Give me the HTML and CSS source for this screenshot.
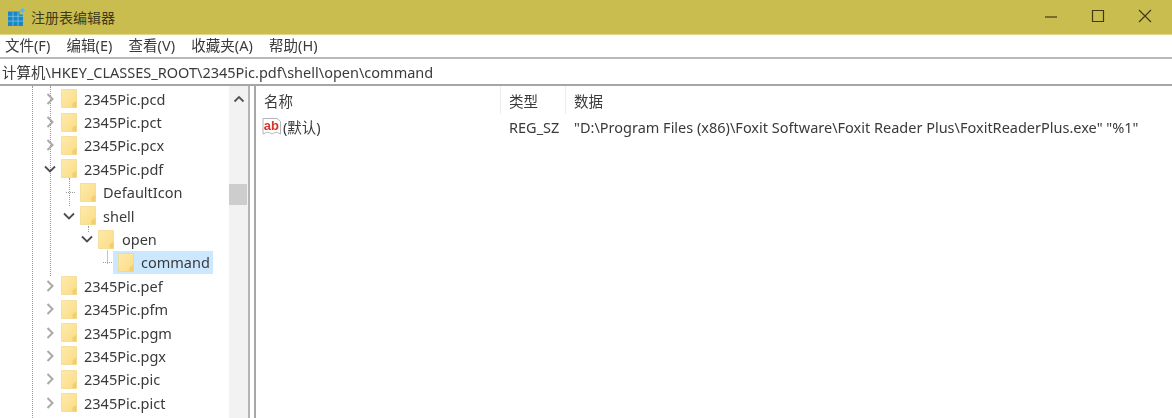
FILE: index.html
```html
<!DOCTYPE html>
<html lang="zh-CN">
<head>
<meta charset="utf-8">
<title>注册表编辑器</title>
<link rel="stylesheet" href="styles.css">
</head>
<body>
<svg class="defs" width="0" height="0" aria-hidden="true">
  <defs>
    <linearGradient id="fg" x1="0" y1="0" x2="1" y2="1">
      <stop offset="0" stop-color="#fdeaac"/>
      <stop offset="1" stop-color="#fbdc84"/>
    </linearGradient>
    <symbol id="folder" viewBox="0 0 16 19">
      <path d="M.5.500h15v18H.5z" fill="url(#fg)" stroke="#efd27e" stroke-width=".6"/>
      <path d="M11.500 18.600v-4l4-3v7z" fill="#f3cf6c"/>
    </symbol>
    <symbol id="chev-r" viewBox="0 0 12 14">
      <path d="M3.500 2l5 5-5 5" fill="none" stroke="#a9a9a9" stroke-width="2"/>
    </symbol>
    <symbol id="chev-d" viewBox="0 0 12 14">
      <path d="M1 4.500l5 5 5-5" fill="none" stroke="#4d4d4d" stroke-width="1.800"/>
    </symbol>
  </defs>
</svg>
<div class="window">
  <header class="titlebar">
    <svg class="app-icon" viewBox="0 0 18 18" width="18" height="18" aria-hidden="true">
      <path d="M1 3.500h15v14.500H1z" fill="#1a86c4"/>
      <path d="M6 3.500V18M11 3.500V18M1 8.300h15M1 13.100h15" stroke="#7cc4e6" stroke-width=".8"/>
      <path d="M12.500 3.500h4v3h-4z" fill="#c9bd50"/>
      <path d="M15.500 0l2.500 2.500-2.500 2.500-2.500-2.500z" fill="#5cb8e0"/>
    </svg>
    <span class="title">注册表编辑器</span>
    <div class="controls">
      <svg width="14" height="14" viewBox="0 0 14 14" aria-hidden="true"><path d="M1 8h12" stroke="#3e3a14" stroke-width="1.200"/></svg>
      <svg width="14" height="14" viewBox="0 0 14 14" aria-hidden="true"><path d="M1.500 1.500h11v11h-11z" fill="none" stroke="#3e3a14" stroke-width="1.200"/></svg>
      <svg width="14" height="14" viewBox="0 0 14 14" aria-hidden="true"><path d="M1 1l12 12M13 1L1 13" stroke="#3e3a14" stroke-width="1.200"/></svg>
    </div>
  </header>
  <nav class="menubar">
    <span>文件(F)</span><span>编辑(E)</span><span>查看(V)</span><span>收藏夹(A)</span><span>帮助(H)</span>
  </nav>
  <div class="address">计算机\HKEY_CLASSES_ROOT\2345Pic.pdf\shell\open\command</div>
  <main class="panes">
    <aside class="tree-pane">
      <div class="tree">
        <span class="guide guide-root"></span>
        <span class="guide guide-pdf"></span>
        <span class="guide guide-shell"></span>
        <span class="guide guide-open"></span>
        <span class="guide guide-cmd"></span>
        <div class="row l0"><svg class="tw"><use href="#chev-r"/></svg><svg class="fd"><use href="#folder"/></svg><span>2345Pic.pcd</span></div>
        <div class="row l0"><svg class="tw"><use href="#chev-r"/></svg><svg class="fd"><use href="#folder"/></svg><span>2345Pic.pct</span></div>
        <div class="row l0"><svg class="tw"><use href="#chev-r"/></svg><svg class="fd"><use href="#folder"/></svg><span>2345Pic.pcx</span></div>
        <div class="row l0"><svg class="tw"><use href="#chev-d"/></svg><svg class="fd"><use href="#folder"/></svg><span>2345Pic.pdf</span></div>
        <div class="row l1"><span class="tw conn"></span><svg class="fd"><use href="#folder"/></svg><span>DefaultIcon</span></div>
        <div class="row l1"><svg class="tw"><use href="#chev-d"/></svg><svg class="fd"><use href="#folder"/></svg><span>shell</span></div>
        <div class="row l2"><svg class="tw"><use href="#chev-d"/></svg><svg class="fd"><use href="#folder"/></svg><span>open</span></div>
        <div class="row l3"><span class="tw conn"></span><span class="sel"><svg class="fd"><use href="#folder"/></svg><span>command</span></span></div>
        <div class="row l0"><svg class="tw"><use href="#chev-r"/></svg><svg class="fd"><use href="#folder"/></svg><span>2345Pic.pef</span></div>
        <div class="row l0"><svg class="tw"><use href="#chev-r"/></svg><svg class="fd"><use href="#folder"/></svg><span>2345Pic.pfm</span></div>
        <div class="row l0"><svg class="tw"><use href="#chev-r"/></svg><svg class="fd"><use href="#folder"/></svg><span>2345Pic.pgm</span></div>
        <div class="row l0"><svg class="tw"><use href="#chev-r"/></svg><svg class="fd"><use href="#folder"/></svg><span>2345Pic.pgx</span></div>
        <div class="row l0"><svg class="tw"><use href="#chev-r"/></svg><svg class="fd"><use href="#folder"/></svg><span>2345Pic.pic</span></div>
        <div class="row l0"><svg class="tw"><use href="#chev-r"/></svg><svg class="fd"><use href="#folder"/></svg><span>2345Pic.pict</span></div>
      </div>
      <div class="scrollbar">
        <svg class="sb-up" width="12" height="8" viewBox="0 0 12 8" aria-hidden="true"><path d="M1.500 6.500l4.500-4.500 4.500 4.500" fill="none" stroke="#555" stroke-width="1.800"/></svg>
        <div class="thumb"></div>
      </div>
    </aside>
    <section class="list-pane">
      <div class="list-head">
        <span class="col col-name">名称</span>
        <span class="col col-type">类型</span>
        <span class="col col-data">数据</span>
      </div>
      <div class="list-row">
        <span class="col col-name">
          <svg class="ab" width="20" height="20" viewBox="0 0 20 20" aria-hidden="true">
            <path d="M1 1.500h14l3.500 3v12.500l-3-1.500c-2-.6-3.500.3-5.500 1.500-2-1.200-3.500-2-5.500-1.500L1 17z" fill="#fff" stroke="#b5b5b5"/>
            <text x="1.800" y="13" class="ab-text">ab</text>
          </svg>
          <span>(默认)</span>
        </span>
        <span class="col col-type">REG_SZ</span>
        <span class="col col-data">"D:\Program Files (x86)\Foxit Software\Foxit Reader Plus\FoxitReaderPlus.exe" "%1"</span>
      </div>
    </section>
  </main>
</div>
</body>
</html>
```
FILE: styles.css
```css
* { box-sizing: border-box; }
html, body { margin: 0; padding: 0; background: #fff; overflow: hidden; }
body { font-family: "Noto Sans", "Noto Sans CJK SC", sans-serif; font-size: 14.500px; color: #3a3a3a; }
.defs { position: absolute; }
.window { width: 1172px; height: 418px; display: flex; flex-direction: column; overflow: hidden; filter: blur(0.3px); }

.titlebar { height: 35px; flex: none; background: #c9bd50; display: flex; align-items: center; padding-left: 7px; border-bottom: 1px solid #e2d78e; }
.app-icon { flex: none; margin-right: 6px; }
.title { font-size: 14px; color: #3f3b1c; }
.controls { margin-left: auto; display: flex; width: 164px; justify-content: space-between; padding: 0 20px 2px 36px; align-items: center; }

.menubar { height: 24px; flex: none; display: flex; align-items: center; gap: 16.300px; padding: 0 0 3px 5px; border-bottom: 2px solid #b9b9b9; }

.address { height: 27px; flex: none; display: flex; align-items: center; padding-left: 2px; border-bottom: 2px solid #a6a6a6; white-space: nowrap; }

.panes { flex: 1; display: flex; min-height: 0; }

.tree-pane { width: 256px; flex: none; display: flex; border-right: 2px solid #a8a8a8; position: relative; }
.tree { flex: 1; position: relative; padding-top: 1px; min-width: 0; }
.scrollbar { width: 21px; flex: none; position: relative; background: #f2f2f2; margin-right: 4px; border-right: 2px solid #b4b4b4; }
.sb-up { position: absolute; left: 4px; top: 9px; }
.thumb { position: absolute; left: 0; width: 18px; top: 98px; height: 21px; background: #cdcdcd; }

.guide { position: absolute; width: 0; border-left: 1px dotted #9a9a9a; }
.guide-root { left: 32px; top: 0; bottom: 0; }
.guide-pdf { left: 50px; top: 0; height: 190px; }
.guide-shell { left: 69px; top: 92px; height: 28px; }
.guide-open { left: 88px; top: 140px; height: 6px; }
.guide-cmd { left: 107px; top: 164px; height: 14px; border-left: 1px solid #c4c4c4; }

.row { height: 23.400px; display: flex; align-items: center; white-space: nowrap; position: relative; }
.row.l0 { padding-left: 44px; }
.row.l1 { padding-left: 63px; }
.row.l2 { padding-left: 81px; }
.row.l3 { padding-left: 100px; }
.row.l2 .fd { margin-right: 8px; }
.tw { width: 12px; height: 14px; flex: none; margin-right: 5px; display: block; }
.conn { height: 1px; border-top: 1px dotted #9a9a9a; margin-left: 3px; width: 9px; }
.fd { width: 16px; height: 19px; flex: none; margin-right: 7px; display: block; background: #fff; }
.sel { display: flex; align-items: center; background: #cce8ff; height: 23px; margin-left: -4px; padding: 0 5px; width: 100px; }
.sel .fd { margin-right: 7px; background: transparent; }

.list-pane { flex: 1; min-width: 0; }
.list-head, .list-row { display: flex; white-space: nowrap; align-items: center; }
.list-head { height: 29px; padding-bottom: 1px; }
.list-row { height: 23px; }
.col { flex: none; display: flex; align-items: center; }
.col-name { width: 245px; padding-left: 8px; }
.col-type { width: 65px; padding-left: 8px; }
.col-data { padding-left: 8px; }
.list-head .col { height: 28px; border-right: 1px solid #ececec; }
.list-head .col-data { border-right: 0; }
.ab { flex: none; margin: 0 1px 0 -2px; }
.ab-text { font-family: "Liberation Sans", sans-serif; font-weight: 700; font-size: 13px; fill: #d8352b; }
```
